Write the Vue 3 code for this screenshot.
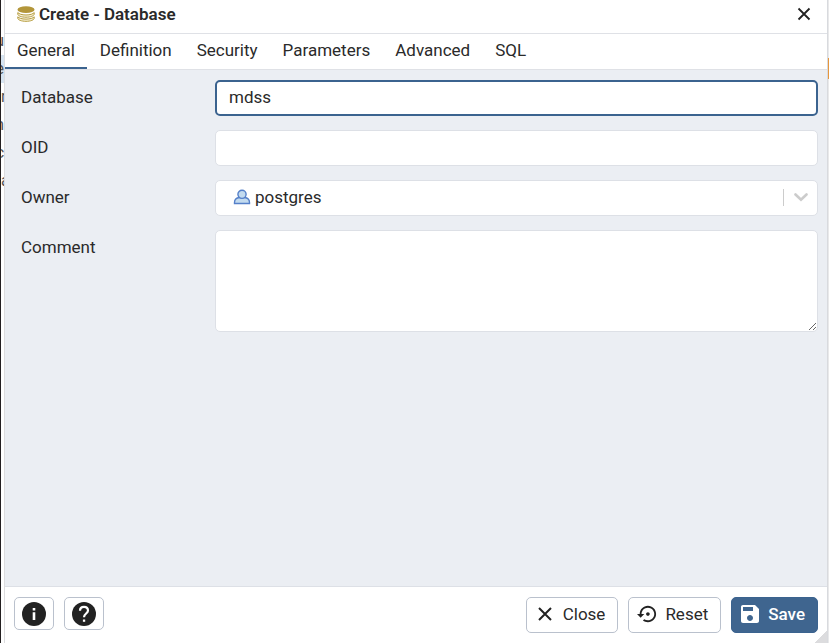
<script setup>
import { ref, reactive } from 'vue';

const tabs = ['General', 'Definition', 'Security', 'Parameters', 'Advanced', 'SQL'];
const activeTab = ref('General');

const form = reactive({
  name: 'mdss',
  oid: '',
  owner: 'postgres',
  comment: ''
});

// tree labels that peek out behind the dialog
const treeLabels = ['u', 'e', 're', 'm', 'c', 'ac'];

function reset() {
  form.name = 'mdss';
  form.oid = '';
  form.owner = 'postgres';
  form.comment = '';
}
</script>

<template>
  <div class="page">
    <div class="tree" aria-hidden="true">
      <span v-for="(label, i) in treeLabels" :key="i" class="tree-row" :class="{ selected: i === 1, start: label.length > 1 }">{{ label }}</span>
    </div>

    <section class="dialog">
      <header class="title-bar">
        <svg class="db-icon" width="18" height="16" viewBox="0 0 18 16">
          <g fill="#f7f1d8" stroke="#b59b3c" stroke-width="1">
            <path d="M.8 10.800v1.400c0 1.700 3.600 3.100 8.200 3.100s8.200-1.400 8.200-3.100v-1.400c-1 1.300-4 2.300-8.200 2.300s-7.200-1-8.200-2.300z" />
            <path d="M.8 6.500v1.600c0 1.700 3.600 3.100 8.200 3.100s8.200-1.400 8.200-3.100V6.500c-1 1.400-4 2.500-8.200 2.500S1.800 7.900.8 6.500z" />
          </g>
          <ellipse cx="9" cy="3.700" rx="8.500" ry="3.400" fill="#b3963a" />
        </svg>
        <h1>Create - Database</h1>
        <button class="close-x" type="button" aria-label="Close dialog">
          <svg width="14" height="14" viewBox="0 0 14 14">
            <path d="M1.500 1.500l11 11M12.500 1.500l-11 11" stroke="#222" stroke-width="1.800" fill="none" />
          </svg>
        </button>
      </header>

      <nav class="tabs">
        <button
          v-for="tab in tabs"
          :key="tab"
          type="button"
          class="tab"
          :class="{ active: tab === activeTab }"
          @click="activeTab = tab"
        >{{ tab }}</button>
      </nav>

      <form class="form" @submit.prevent>
        <div class="row">
          <label for="name">Database</label>
          <input id="name" v-model="form.name" class="field focused" type="text" />
        </div>
        <div class="row">
          <label for="oid">OID</label>
          <input id="oid" v-model="form.oid" class="field" type="text" />
        </div>
        <div class="row">
          <label for="owner">Owner</label>
          <div class="select-wrap">
            <select id="owner" v-model="form.owner" class="field">
              <option>postgres</option>
            </select>
            <svg class="user-icon" width="18" height="16" viewBox="0 0 18 16">
              <path d="M1.500 14.500v-1c0-3 2.200-4.700 5-5h5c2.800.3 5 2 5 5v1z" fill="#c3dbef" stroke="#5580c9" stroke-width="1.400" />
              <circle cx="9" cy="5.300" r="4.100" fill="#c3dbef" stroke="#5580c9" stroke-width="1.400" />
            </svg>
            <span class="select-end">
              <svg width="14" height="9" viewBox="0 0 14 9">
                <path d="M1.500 1.500L7 6.800l5.500-5.300" fill="none" stroke="#ccc" stroke-width="2.600" stroke-linecap="round" />
              </svg>
            </span>
          </div>
        </div>
        <div class="row">
          <label for="comment">Comment</label>
          <textarea id="comment" v-model="form.comment" class="field"></textarea>
        </div>
      </form>

      <footer class="footer">
        <button class="btn icon-only" type="button" aria-label="Info">
          <svg width="24" height="24" viewBox="0 0 24 24">
            <circle cx="12" cy="12" r="12" fill="#222" />
            <path d="M10.700 6h2.600v2.500h-2.600zM10.700 10.200h2.600V18h-2.600z" fill="#fff" />
          </svg>
        </button>
        <button class="btn icon-only" type="button" aria-label="Help">
          <svg width="24" height="24" viewBox="0 0 24 24">
            <circle cx="12" cy="12" r="12" fill="#222" />
            <path d="M8 8.800C8 6.300 9.700 4.800 12 4.800s4 1.500 4 3.700c0 2.900-4 3.200-4 6.700" fill="none" stroke="#fff" stroke-width="2.200" />
            <path d="M10.900 17.500h2.300v2.300h-2.300z" fill="#fff" />
          </svg>
        </button>
        <span class="spacer"></span>
        <button class="btn" type="button">
          <svg width="20" height="20" viewBox="0 0 20 20">
            <path d="M4 4l12 12M16 4L4 16" stroke="#222" stroke-width="2" fill="none" />
          </svg>
          Close
        </button>
        <button class="btn" type="button" @click="reset">
          <svg width="20" height="20" viewBox="0 2 22 20">
            <path fill="#222" d="M14 12c0-1.100-.9-2-2-2s-2 .9-2 2 .9 2 2 2 2-.9 2-2zm-2-9c-4.970 0-9 4.030-9 9H0l4 4 4-4H5c0-3.870 3.130-7 7-7s7 3.130 7 7-3.130 7-7 7c-1.510 0-2.910-.490-4.060-1.300l-1.420 1.440C8.040 20.300 9.940 21 12 21c4.970 0 9-4.030 9-9s-4.030-9-9-9z" />
          </svg>
          Reset
        </button>
        <button class="btn primary" type="button">
          <svg width="20" height="20" viewBox="2 2 20 20">
            <path fill="#fff" d="M17 3H5c-1.110 0-2 .9-2 2v14c0 1.100.89 2 2 2h14c1.100 0 2-.9 2-2V7l-4-4zm-5 16c-1.660 0-3-1.340-3-3s1.340-3 3-3 3 1.340 3 3-1.340 3-3 3zm3-10H5V5h10v4z" />
          </svg>
          Save
        </button>
        <span class="grip"></span>
      </footer>
    </section>

    <div class="backdrop-right" aria-hidden="true"></div>
  </div>
</template>

<style>
body {
  margin: 0;
}
</style>

<style scoped>
.page {
  display: flex;
  height: 100vh;
  box-sizing: border-box;
  border-left: 1px solid #231f20;
  font-family: Roboto, sans-serif;
  font-size: 17px;
  color: #2a2a2a;
  background: #fff;
  overflow: hidden;
}

.tree {
  display: flex;
  flex: 0 0 4px;
  flex-direction: column;
  box-sizing: border-box;
  padding-top: 27px;
  overflow: hidden;
  font-size: 16px;
  color: #555;
  border-right: 1px solid #dcdcde;
}

.tree-row {
  display: flex;
  justify-content: flex-end;
  flex: 0 0 28px;
  line-height: 28px;
}

.tree-row.start {
  justify-content: flex-start;
}

.tree-row.selected {
  background: #d6e4f1;
}

.dialog {
  position: relative;
  display: flex;
  flex: 1;
  min-width: 0;
  flex-direction: column;
  background: #ebeef3;
}

.title-bar {
  display: flex;
  align-items: center;
  gap: 4px;
  flex: 0 0 33px;
  box-sizing: border-box;
  padding: 0 12px 5px;
  background: #fff;
}

h1 {
  flex: 1;
  margin: 0;
  font-size: 17px;
  font-weight: 600;
}

button {
  font: inherit;
  color: inherit;
  cursor: pointer;
}

.close-x {
  display: flex;
  padding: 4px;
  border: none;
  background: none;
}

.tabs {
  display: flex;
  gap: 1px;
  flex: 0 0 37px;
  box-sizing: border-box;
  border-top: 1px solid #dfe1e6;
  border-bottom: 1px solid #dfe1e6;
  background: #fff;
}

.tab {
  padding: 0 12px 2px;
  border: none;
  border-bottom: 2px solid transparent;
  background: none;
}

.tab.active {
  border-bottom-color: #3b638f;
}

.form {
  display: flex;
  flex: 1;
  flex-direction: column;
  gap: 14px;
  padding: 10px 9px 10px 16px;
}

.row {
  display: flex;
  align-items: flex-start;
}

label {
  flex: 0 0 194px;
  line-height: 34px;
}

.field {
  display: block;
  flex: 1;
  min-width: 0;
  width: 100%;
  height: 36px;
  box-sizing: border-box;
  padding: 0 13px 2px;
  border: 1px solid #dde0e6;
  border-radius: 5px;
  outline: none;
  background: #fff;
  font: inherit;
  color: inherit;
}

.field.focused {
  padding: 0 12px 2px;
  border: 2px solid #3b638f;
}

textarea.field {
  height: 102px;
  padding: 8px 13px;
  resize: vertical;
}

.select-wrap {
  position: relative;
  flex: 1;
}

select.field {
  padding: 0 48px 3px 39px;
  appearance: none;
}

.user-icon {
  position: absolute;
  top: 9px;
  left: 18px;
  pointer-events: none;
}

.select-end {
  position: absolute;
  top: 9px;
  right: 10px;
  display: flex;
  align-items: center;
  height: 17px;
  padding-left: 10px;
  border-left: 1px solid #ccc;
  pointer-events: none;
}

.footer {
  position: relative;
  display: flex;
  align-items: flex-start;
  gap: 10px;
  flex: 0 0 56px;
  box-sizing: border-box;
  padding: 10px 9px;
  border-top: 1px solid #dde0e6;
  background: #fff;
}

.btn {
  display: flex;
  align-items: center;
  justify-content: center;
  gap: 8px;
  height: 36px;
  padding: 0 12px 2px 8px;
  border: 1px solid #bac1cd;
  border-radius: 5px;
  background: #fff;
}

.btn.icon-only {
  width: 40px;
  height: 33px;
  padding: 0;
}

.btn.primary {
  border-color: #3b638f;
  background: #3f658f;
  color: #fff;
  font-weight: 500;
}

.spacer {
  flex: 1;
}

.grip {
  position: absolute;
  right: 0;
  bottom: 0;
  width: 12px;
  height: 12px;
  background: linear-gradient(135deg, transparent 50%, #dcdcde 50%);
}

.backdrop-right {
  flex: 0 0 2px;
  box-sizing: border-box;
  height: 100%;
  border-left: 1px solid #d8dade;
  background: linear-gradient(#e9e9ea 58px, #e6963c 58px, #e6963c 79px, #e9e9ea 79px);
}
</style>
